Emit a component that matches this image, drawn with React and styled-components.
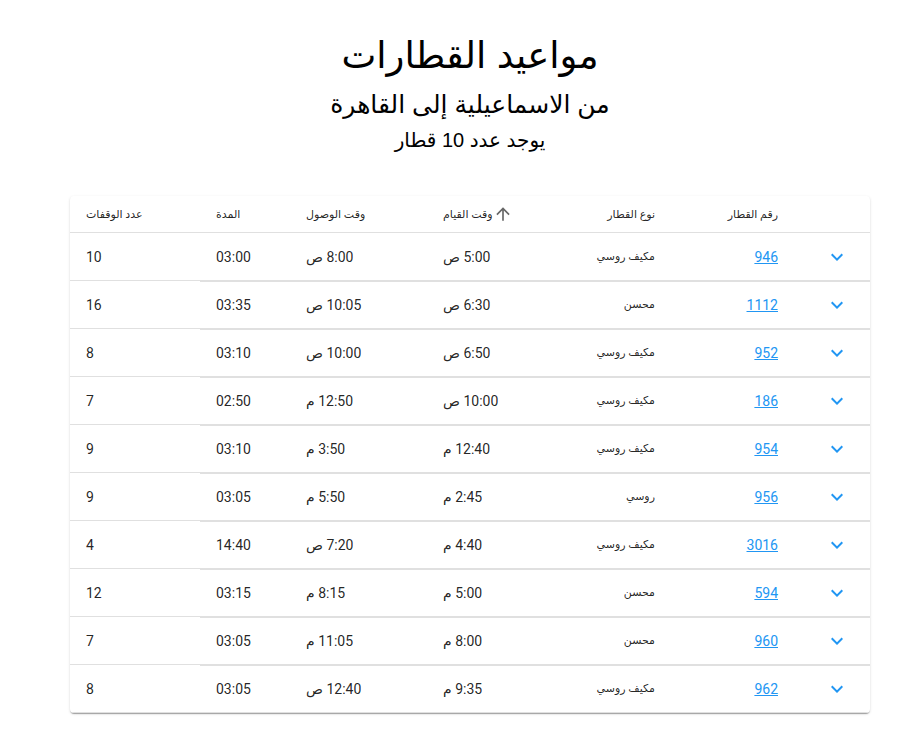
import React from 'react'
import styled, { createGlobalStyle } from 'styled-components';

const GlobalStyle = createGlobalStyle`
    html, body {
        margin: 0;
        padding: 0;
        background: #fff;
        font-family: Roboto, "Liberation Sans", "DejaVu Sans", sans-serif;
        color: rgba(0, 0, 0, 0.87);
    }
`;

const Page = styled.div`
    width: 800px;
    margin: 0 0 0 70px;
    padding: 34px 0 16px;
`;

const Heading = styled.header`
    direction: rtl;
    text-align: center;
    display: flex;
    flex-flow: column nowrap;
    align-items: center;
    font-family: "Liberation Sans", "DejaVu Sans", sans-serif;
    color: #000;
    margin: 0 0 42px;

    .title {
        font-size: 37px;
        font-weight: normal;
        line-height: 44px;
        margin: 0;
    }
    .route {
        font-size: 25px;
        font-weight: normal;
        line-height: 36px;
        margin: 8px 0 0;
    }
    .count {
        font-size: 20px;
        font-weight: normal;
        line-height: 28px;
        margin: 4px 0 0;
    }
`;

const Card = styled.div`
    background: #fff;
    border-radius: 4px;
    box-shadow: 0 2px 1px -1px rgba(0,0,0,0.2), 0 1px 1px 0 rgba(0,0,0,0.14), 0 1px 3px 0 rgba(0,0,0,0.12);
    overflow: hidden;
`;

const columns = '130px 90px 137px 133px 111px 123px 76px';

const Row = styled.div`
    display: grid;
    grid-template-columns: ${columns};
    height: ${p => p.$head ? '37px' : '48px'};
`;

const Cell = styled.div`
    display: flex;
    align-items: center;
    justify-content: ${p => p.$end ? 'flex-start' : 'flex-end'};
    padding: 0 16px;
    direction: rtl;
    font-size: ${p => p.$head || p.$small ? '11px' : '14px'};
    border-bottom: 1px solid #e0e0e0;
    box-shadow: ${p => p.$first || p.$head ? 'none' : '0 1px 0 #e0e0e0'};
    position: relative;
    z-index: ${p => p.$first ? 1 : 0};
`;

const TrainLink = styled.a`
    color: #2196f3;
    text-decoration: underline;
    font-size: 14px;
`;

const SortIcon = styled.svg`
    width: 20px;
    height: 20px;
    margin-right: 4px;
    fill: rgba(0,0,0,0.6);
`;

const ExpandButton = styled.div`
    display: flex;
    align-items: center;
    justify-content: center;
    width: 100%;
    padding-left: 10px;
    svg {
        width: 24px;
        height: 24px;
        fill: #2196f3;
    }
`;

const trains = [
    {number: '946', type: 'مكيف روسي', dep: '5:00 ص', arr: '8:00 ص', dur: '03:00', stops: 10},
    {number: '1112', type: 'محسن', dep: '6:30 ص', arr: '10:05 ص', dur: '03:35', stops: 16},
    {number: '952', type: 'مكيف روسي', dep: '6:50 ص', arr: '10:00 ص', dur: '03:10', stops: 8},
    {number: '186', type: 'مكيف روسي', dep: '10:00 ص', arr: '12:50 م', dur: '02:50', stops: 7},
    {number: '954', type: 'مكيف روسي', dep: '12:40 م', arr: '3:50 م', dur: '03:10', stops: 9},
    {number: '956', type: 'روسي', dep: '2:45 م', arr: '5:50 م', dur: '03:05', stops: 9},
    {number: '3016', type: 'مكيف روسي', dep: '4:40 م', arr: '7:20 ص', dur: '14:40', stops: 4},
    {number: '594', type: 'محسن', dep: '5:00 م', arr: '8:15 م', dur: '03:15', stops: 12},
    {number: '960', type: 'محسن', dep: '8:00 م', arr: '11:05 م', dur: '03:05', stops: 7},
    {number: '962', type: 'مكيف روسي', dep: '9:35 م', arr: '12:40 ص', dur: '03:05', stops: 8},
];

const App = () => {
    return <>
        <GlobalStyle/>
        <Page>
            <Heading>
                <h1 className="title">مواعيد القطارات</h1>
                <h2 className="route">من الاسماعيلية إلى القاهرة</h2>
                <h3 className="count">يوجد عدد 10 قطار</h3>
            </Heading>

            <Card>
                <Row $head>
                    <Cell $head $first>عدد الوقفات</Cell>
                    <Cell $head>المدة</Cell>
                    <Cell $head>وقت الوصول</Cell>
                    <Cell $head>
                        <SortIcon viewBox="0 0 24 24"><path d="M4 12l1.41 1.41L11 7.83V20h2V7.83l5.58 5.59L20 12l-8-8-8 8z"/></SortIcon>
                        <span>وقت القيام</span>
                    </Cell>
                    <Cell $head $end>نوع القطار</Cell>
                    <Cell $head $end>رقم القطار</Cell>
                    <Cell $head/>
                </Row>
                {trains.map((train, key) => <Row key={key}>
                    <Cell $first>{train.stops}</Cell>
                    <Cell>{train.dur}</Cell>
                    <Cell>{train.arr}</Cell>
                    <Cell>{train.dep}</Cell>
                    <Cell $end $small>{train.type}</Cell>
                    <Cell $end><TrainLink href="#">{train.number}</TrainLink></Cell>
                    <Cell>
                        <ExpandButton>
                            <svg viewBox="0 0 24 24"><path d="M16.59 8.59L12 13.17 7.41 8.59 6 10l6 6 6-6z"/></svg>
                        </ExpandButton>
                    </Cell>
                </Row>)}
            </Card>
        </Page>
    </>
}

export default App;
